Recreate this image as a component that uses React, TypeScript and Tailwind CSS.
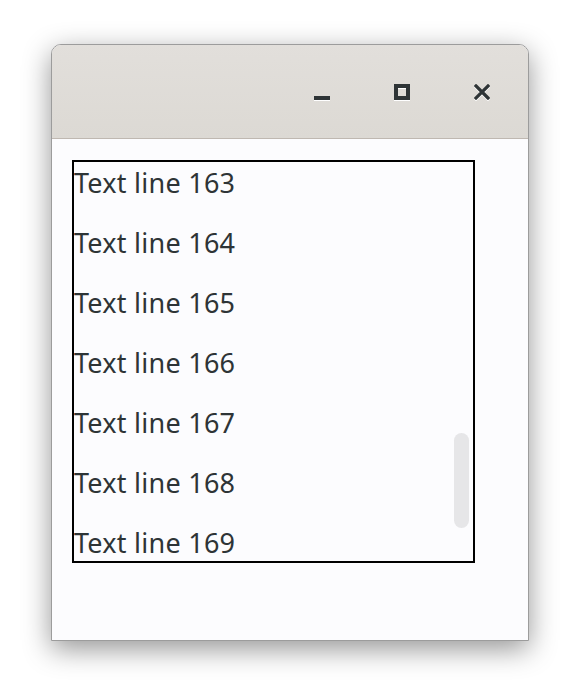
import React from "react";

const lines = [163, 164, 165, 166, 167, 168, 169];

export default function App() {
  return (
    <div className="w-[580px] h-[698px] bg-white overflow-hidden pt-[44px] pl-[51px]">
      <div className="w-[478px] h-[597px] flex flex-col rounded-t-[10px] border border-[#9c9c9c] bg-[#fcfcfe] shadow-[0_8px_28px_rgba(0,0,0,0.42)] overflow-hidden">
        <div className="h-[94px] shrink-0 flex items-center justify-end gap-[64px] pr-[38px] bg-gradient-to-b from-[#e2dfdb] to-[#dcd9d4] border-b border-[#bfb8b1]">
          <div className="w-4 h-4 flex items-end drop-shadow-[0_1px_0_#ffffff]">
            <div className="w-4 h-[4px] bg-[#2e3436]" />
          </div>
          <div className="w-4 h-4 border-[4px] border-[#2e3436] drop-shadow-[0_1px_0_#ffffff]" />
          <svg width="16" height="16" viewBox="0 0 16 16" className="drop-shadow-[0_1px_0_#ffffff]">
            <path d="M2 2 L14 14 M14 2 L2 14" stroke="#2e3436" strokeWidth="3.2" strokeLinecap="square" />
          </svg>
        </div>
        <div className="flex-1 pl-[20px] pt-[21px]">
          <div className="relative w-[403px] h-[403px] border-2 border-black overflow-hidden">
            <div className="-mt-[9px] flex flex-col">
              {lines.map((n) => (
                <div
                  key={n}
                  className="h-[60px] leading-[60px] text-[27px] tracking-[0.25px] text-[#2e3436] whitespace-nowrap"
                  style={{ fontFamily: '"Noto Sans", sans-serif' }}
                >
                  Text line {n}
                </div>
              ))}
            </div>
            <div className="absolute left-[380px] top-[271px] w-[15px] h-[95px] rounded-full bg-[#e6e6e8]" />
          </div>
        </div>
      </div>
    </div>
  );
}
